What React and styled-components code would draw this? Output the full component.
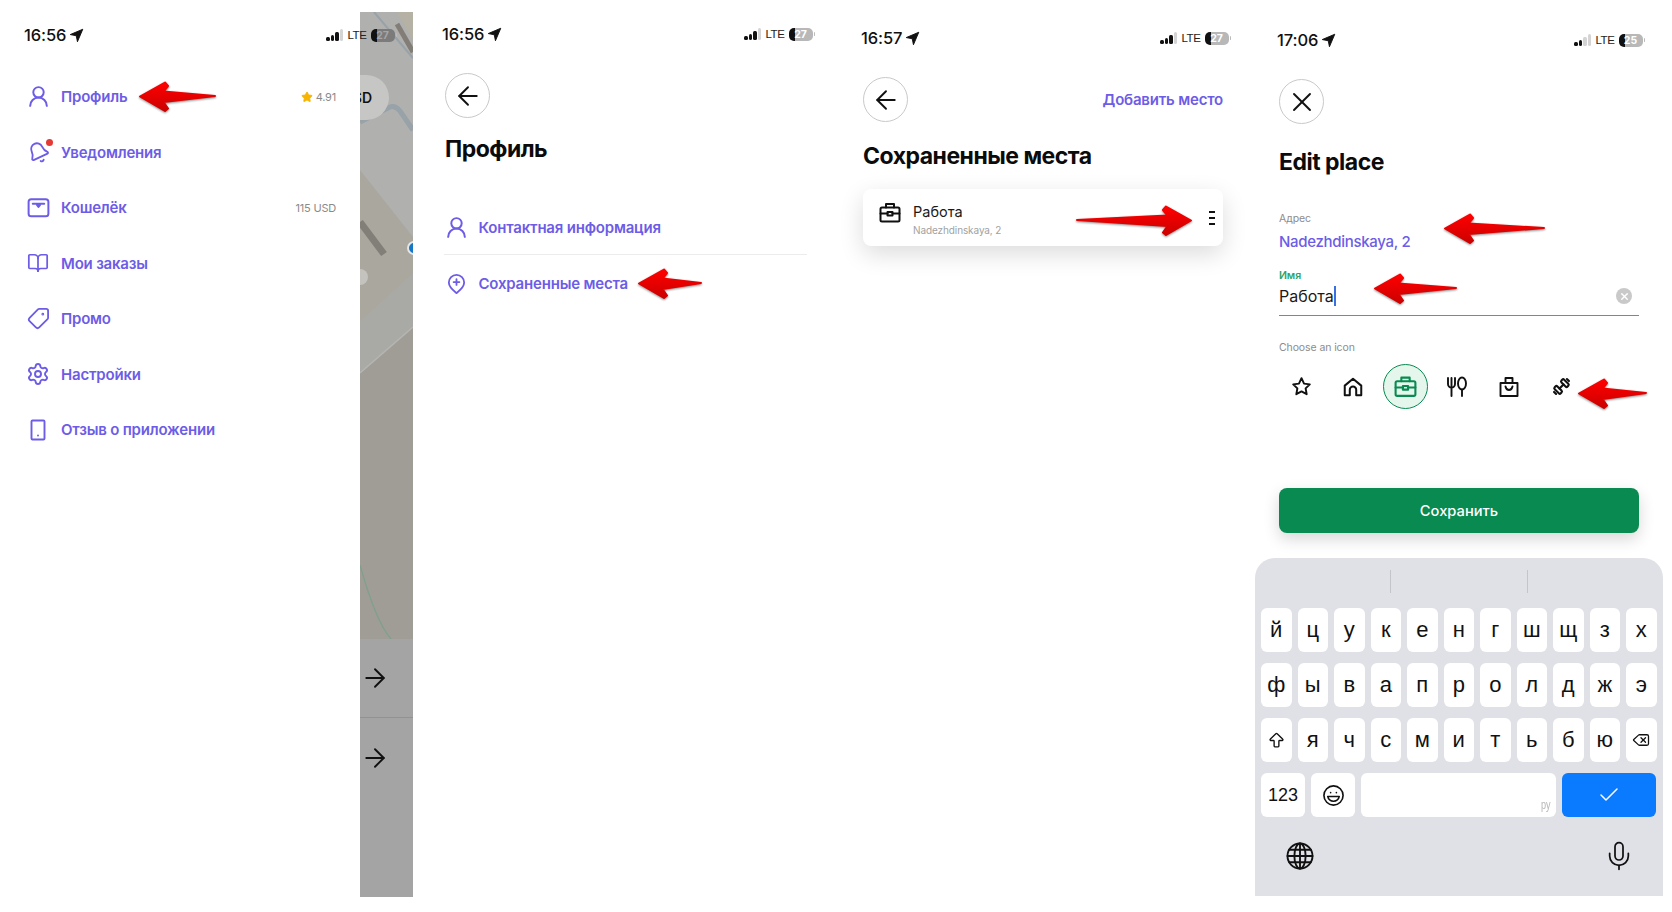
import React from 'react';
import styled, { createGlobalStyle } from 'styled-components';
import {
  ArrowLeft, ArrowRight, BookOpen, Check, Delete, Laugh, Mic, Settings, Star, Tag, UserRound, X, ArrowBigUp, Bell,
} from 'lucide-react';

const PURPLE = '#6c5ce6';
const GREEN = '#088a50';

const Global = createGlobalStyle`
  html, body { margin: 0; padding: 0; background: #fff; }
  body { font-family: Inter, "Noto Sans", sans-serif; color: #111; }
  * { box-sizing: border-box; }
`;

const Board = styled.div`
  position: relative;
  display: flex;
  width: 1672px;
  height: 912px;
  overflow: hidden;
  background: #fff;
`;

const Screen = styled.section`
  flex: none;
  width: ${p => p.$width}px;
  display: flex;
  flex-direction: ${p => (p.$row ? 'row' : 'column')};
  align-items: flex-start;
`;

const Content = styled.div`
  width: ${p => p.$width}px;
  margin-left: ${p => p.$left}px;
`;

/* status bar */
const Status = styled.div`
  position: relative;
  z-index: 2;
  flex: none;
  width: ${p => p.$width}px;
  height: 20px;
  margin: ${p => p.$top}px 0 ${p => p.$bottom ?? 29}px ${p => p.$left}px;
  display: flex;
  align-items: center;
`;
const Clock = styled.span`
  font-size: 16.5px;
  font-weight: 500;
  letter-spacing: -0.1px;
  color: #111;
  margin-right: 3px;
`;
const Spacer = styled.span`flex: 1;`;
const Bars = styled.span`
  display: flex;
  align-items: flex-end;
  gap: 1px;
  height: 12px;
  margin-right: 4px;
`;
const SignalBar = styled.i`
  display: block;
  width: 3.6px;
  border-radius: 1.5px;
  height: ${p => p.$h}px;
  background: ${p => (p.$on ? '#111' : '#d4d4d4')};
`;
const Lte = styled.span`
  font-family: "Liberation Sans", sans-serif;
  font-size: 11.5px;
  letter-spacing: -0.4px;
  color: #222;
  margin-right: 4px;
`;
const Battery = styled.span`
  display: flex;
  align-items: center;
  justify-content: center;
  width: 24px;
  height: 13px;
  border-radius: 5px;
  font-size: 10.5px;
  font-weight: 700;
  color: ${p => (p.$dim ? '#a5a5a5' : '#fff')};
  background: linear-gradient(90deg, #111 ${p => p.$level}%, ${p => (p.$dim ? '#7b7b7b' : '#b8b8b8')} ${p => p.$level}%);
`;
const Nub = styled.i`
  display: block;
  width: 1.5px;
  height: 4px;
  margin-left: 1px;
  border-radius: 1px;
  background: #bbb;
`;

function LocationArrow() {
  return (
    <svg width="15" height="15" viewBox="0 0 24 24" fill="#111" stroke="#111" strokeWidth="1.5" strokeLinejoin="round">
      <path d="M22 2 2 10.5l9.6 1.9L13.5 22z" />
    </svg>
  );
}

function StatusBar({ time, level, signal = 3, dim, ...rest }) {
  return (
    <Status {...rest}>
      <Clock>{time}</Clock>
      <LocationArrow />
      <Spacer />
      <Bars>
        {[4, 6, 9, 12].map((h, i) => <SignalBar key={h} $h={h} $on={i < signal} />)}
      </Bars>
      <Lte>LTE</Lte>
      <Battery $level={26} $dim={dim}>{level}</Battery>
      <Nub />
    </Status>
  );
}

/* drawer */
const Drawer = styled.div`
  flex: none;
  width: 360px;
  height: 100%;
`;
const Menu = styled.nav`
  margin-top: 24px;
  padding: 0 24px 0 26px;
`;
const MenuRow = styled.div`
  display: flex;
  align-items: center;
  gap: 11px;
  height: 55.5px;
`;
const IconBox = styled.span`
  position: relative;
  flex: none;
  display: flex;
  align-items: center;
  justify-content: center;
  width: 24px;
  height: 24px;
  color: ${p => p.$color || PURPLE};
  & > svg { flex: none; transform: ${p => p.$transform || 'none'}; }
`;
const RedDot = styled.i`
  position: absolute;
  top: -1px;
  right: -3px;
  width: 7px;
  height: 7px;
  border-radius: 50%;
  background: #e53935;
`;
const LinkText = styled.span`
  font-size: 15px;
  font-weight: 600;
  letter-spacing: -0.2px;
  color: ${PURPLE};
`;
const Meta = styled.span`
  margin-left: auto;
  display: flex;
  align-items: center;
  gap: 3px;
  font-size: 11px;
  letter-spacing: -0.2px;
  color: #8a8a8a;
`;

/* map */
const MapStrip = styled.div`
  flex: none;
  width: 53px;
  height: 885px;
  margin-top: 12px;
  display: flex;
  flex-direction: column;
  background: #a4a4a4;
`;
const MapCanvas = styled.div`
  position: relative;
  flex: none;
  height: 627px;
  overflow: hidden;
`;
const MapPill = styled.span`
  position: absolute;
  top: 63px;
  left: -50px;
  width: 79px;
  height: 45px;
  padding-right: 17px;
  border-radius: 0 23px 23px 0;
  display: flex;
  align-items: center;
  justify-content: flex-end;
  font-size: 14px;
  font-weight: 600;
  color: #111;
  background: #c6c6c5;
`;
const SheetRow = styled.div`
  flex: ${p => (p.$grow ? 1 : 'none')};
  height: ${p => (p.$grow ? 'auto' : '79px')};
  padding: ${p => (p.$grow ? '25px' : '24px')} 0 0 0;
  border-bottom: ${p => (p.$grow ? 'none' : '1px solid #929292')};
  color: #111;
`;

/* shared page head */
const RoundButton = styled.button`
  display: flex;
  align-items: center;
  justify-content: center;
  width: 45px;
  height: 45px;
  padding: 0;
  border: 1px solid #c9c9c9;
  border-radius: 50%;
  background: #fff;
  color: #111;
`;
const TopRow = styled.div`
  display: flex;
  align-items: center;
  justify-content: space-between;
`;
const ActionLink = styled.span`
  font-size: 15px;
  font-weight: 600;
  letter-spacing: -0.2px;
  color: ${PURPLE};
`;
const Title = styled.h1`
  margin: ${p => p.$top}px 0 0;
  font-size: 23px;
  line-height: 28px;
  font-weight: 700;
  letter-spacing: -0.5px;
  color: #0b0b0b;
`;

/* profile list */
const ProfileList = styled.div`
  margin-top: 36px;
  margin-left: -1px;
`;
const ProfileRow = styled.div`
  display: flex;
  align-items: center;
  gap: 10.5px;
  height: 56px;
  padding-top: ${p => (p.$first ? 1 : 0)}px;
  border-bottom: ${p => (p.$first ? '1px solid #ececec' : 'none')};
`;

/* saved place card */
const Card = styled.div`
  display: flex;
  align-items: center;
  height: 57px;
  margin-top: 19px;
  padding: 0 8px 0 15px;
  border-radius: 8px;
  background: #fff;
  box-shadow: 0 8px 24px rgba(0, 0, 0, 0.14);
`;
const PlaceIcon = styled.span`
  flex: none;
  display: flex;
  width: 24px;
  height: 24px;
  margin-top: -10px;
  align-items: center;
  justify-content: center;
  color: #111;
`;
const PlaceText = styled.div`
  margin: 4px 0 0 11px;
  flex: 1;
`;
const PlaceName = styled.div`
  font-size: 14.5px;
  line-height: 19px;
  color: #1a1a1a;
`;
const PlaceAddress = styled.div`
  margin-top: 2px;
  font-size: 10px;
  line-height: 14px;
  letter-spacing: -0.1px;
  color: #a2a2a2;
`;
const Dots = styled.span`
  display: flex;
  flex-direction: column;
  gap: 4px;
`;
const Dash = styled.i`
  display: block;
  width: 6px;
  height: 2px;
  background: #111;
`;

/* edit form */
const FieldLabel = styled.div`
  margin-top: ${p => p.$top}px;
  font-size: 10.5px;
  line-height: 14px;
  letter-spacing: -0.1px;
  color: ${p => p.$color || '#8c8c8c'};
  font-weight: ${p => p.$weight || 400};
`;
const AddressValue = styled.div`
  margin-top: 6px;
  font-size: 15px;
  line-height: 20px;
  letter-spacing: -0.3px;
  font-weight: 500;
  color: ${PURPLE};
`;
const InputRow = styled.div`
  display: flex;
  align-items: center;
  padding: 3px 7px 9px 0;
  border-bottom: 1.5px solid #41ab78;
`;
const InputValue = styled.span`
  font-size: 16px;
  line-height: 20px;
  color: #1a1a1a;
`;
const Caret = styled.i`
  display: inline-block;
  width: 2px;
  height: 20px;
  background: #3b6fe0;
`;
const ClearIcon = styled.span`
  margin-left: auto;
  display: flex;
  align-items: center;
  justify-content: center;
  width: 16px;
  height: 16px;
  border-radius: 50%;
  background: #c9c9c9;
  color: #fff;
`;
const IconPicker = styled.div`
  display: flex;
  margin: 9px 0 0 -4px;
`;
const PickerCell = styled.span`
  flex: none;
  width: 52px;
  height: 45px;
  display: flex;
  align-items: center;
  justify-content: center;
  color: #111;
`;
const Selected = styled.span`
  display: flex;
  align-items: center;
  justify-content: center;
  width: 45px;
  height: 45px;
  border: 1.6px solid ${GREEN};
  border-radius: 50%;
  background: #e5f7ec;
  color: ${GREEN};
`;
const SaveButton = styled.button`
  display: block;
  width: 100%;
  height: 45px;
  margin-top: 79px;
  border: 0;
  border-radius: 8px;
  background: ${GREEN};
  color: #fff;
  font-family: inherit;
  font-size: 14.7px;
  font-weight: 500;
  box-shadow: 0 6px 16px rgba(0, 0, 0, 0.16);
`;

/* keyboard */
const Keyboard = styled.div`
  width: 408px;
  height: 338px;
  margin-top: 25px;
  padding: 12px 6px 0;
  border-radius: 20px 20px 0 0;
  background: #e0e1e6;
`;
const Suggestions = styled.div`
  display: flex;
  justify-content: center;
  gap: 136px;
  height: 38px;
`;
const SuggestLine = styled.i`
  display: block;
  width: 1px;
  height: 23px;
  background: #c4c5ca;
`;
const KeyRow = styled.div`
  display: flex;
  gap: 6px;
  margin-bottom: 11px;
`;
const Key = styled.span`
  position: relative;
  flex: none;
  width: ${p => p.$w || 30.5}px;
  height: 44px;
  display: flex;
  align-items: center;
  justify-content: center;
  border-radius: 6px;
  background: ${p => p.$bg || '#fff'};
  color: ${p => p.$fg || '#111'};
  font-family: "Liberation Sans", sans-serif;
  font-size: ${p => p.$size || 22}px;
`;
const LangHint = styled.span`
  position: absolute;
  right: 3px;
  bottom: 5px;
  font-size: 13px;
  color: #b8b8b8;
  transform: scaleX(0.7);
`;
const KeyboardFoot = styled.div`
  display: flex;
  justify-content: space-between;
  align-items: center;
  padding: 12px 22px 0 24px;
  color: #111;
`;

/* annotation arrows */
const ArrowMark = styled.svg`
  position: absolute;
  z-index: 5;
  left: ${p => p.$x}px;
  top: ${p => p.$y}px;
  transform: ${p => (p.$right ? 'scaleX(-1)' : 'none')};
  filter: drop-shadow(0.5px 1.5px 1px rgba(0, 0, 0, 0.45));
  overflow: visible;
`;

function RedArrow({ x, y, w, right, id }) {
  const d = `M2 16.5 L27 2.5 L30 6 L25.5 11.5 L${w} 16 L25.5 22 L30 28.5 L27 31 Z`;
  return (
    <ArrowMark $x={x} $y={y} $right={right} width={w} height="33" viewBox={`0 0 ${w} 33`}>
      <defs>
        <linearGradient id={id} x1="0" y1="0" x2="0" y2="1">
          <stop offset="0" stopColor="#ff0000" />
          <stop offset="1" stopColor="#cc0000" />
        </linearGradient>
      </defs>
      <path d={d} fill={`url(#${id})`} stroke={`url(#${id})`} strokeWidth="2" strokeLinejoin="round" />
    </ArrowMark>
  );
}

/* icons drawn by hand */
const Stroke = ({ children, size = 24, width = 1.9 }) => (
  <svg width={size} height={size} viewBox="0 0 24 24" fill="none" stroke="currentColor" strokeWidth={width} strokeLinecap="round" strokeLinejoin="round">
    {children}
  </svg>
);
const WalletIcon = () => (
  <Stroke size={25}>
    <rect x="2.5" y="4" width="19" height="16.5" rx="2.5" />
    <path d="M6.5 8.5h11" />
    <path d="M10.5 9.5h3l-1.5 2z" fill="currentColor" />
  </Stroke>
);
const PhoneIcon = () => (
  <Stroke>
    <rect x="5.5" y="2.5" width="13" height="19" rx="1" />
    <path d="M12 17.5h.01" />
  </Stroke>
);
const PinPlusIcon = () => (
  <Stroke size={23}>
    <path d="M20 11c0 5-5.5 9-8 11-2.5-2-8-6-8-11a8 8 0 0 1 16 0z" />
    <path d="M12 7.5v6M9 10.5h6" />
  </Stroke>
);
const CaseIcon = ({ size = 25 }) => (
  <Stroke size={size} width={2}>
    <rect x="2.5" y="7" width="19" height="14" rx="1.5" />
    <path d="M8 7V3.5h8V7" />
    <path d="M2.5 13h7M14.5 13h7" />
    <rect x="9.5" y="11.5" width="5" height="3.5" />
  </Stroke>
);
const StarIcon = () => (
  <Stroke size={21} width={2.2}>
    <path d="M12 2.5l2.9 6.2 6.6.9-4.8 4.6 1.2 6.6-5.9-3.2-5.9 3.2 1.2-6.6-4.8-4.6 6.6-.9z" />
  </Stroke>
);
const HomeIcon = () => (
  <Stroke size={22} width={2.2}>
    <path d="M3 21V10.5L12 3l9 7.5V21h-5.5v-6a3.5 3.5 0 0 0-7 0v6z" />
  </Stroke>
);
const CutleryIcon = () => (
  <Stroke>
    <path d="M3 3v6a3.5 3.5 0 0 0 7 0V3M6.5 3v18" />
    <ellipse cx="17" cy="8.5" rx="4" ry="6" />
    <path d="M17 14.5V21" />
  </Stroke>
);
const BagIcon = () => (
  <Stroke>
    <path d="M3.5 8h17v13h-17z" />
    <path d="M8.5 8V3h7v5" />
    <path d="M8.5 11.5c.5 2.5 2 3.5 3.5 3.5s3-1 3.5-3.5" />
  </Stroke>
);
const DumbbellIcon = () => (
  <Stroke size={23} width={2.2}>
    <g transform="rotate(-45 12 12)">
      <path d="M9 12h6M2.5 10.5v3M21.5 10.5v3" />
      <rect x="5" y="7.5" width="4" height="9" rx="1.5" />
      <rect x="15" y="7.5" width="4" height="9" rx="1.5" />
    </g>
  </Stroke>
);
const GlobeIcon = () => (
  <Stroke size={30} width={1.5}>
    <circle cx="12" cy="12" r="10" />
    <ellipse cx="12" cy="12" rx="4.5" ry="10" />
    <path d="M12 2v20M2 12h20M3.4 7h17.2M3.4 17h17.2" />
  </Stroke>
);
const MapArt = () => (
  <svg width="53" height="627" viewBox="0 0 53 627">
    <rect width="53" height="627" fill="#b0b0ae" />
    <path d="M0 158 L53 225 V262 L0 310Z" fill="#aaa79e" />
    <path d="M0 210 L24 242" stroke="#827f78" strokeWidth="7" />
    <path d="M0 310 L53 262 V315 L0 361Z" fill="#a9a9a6" />
    <path d="M0 361 L53 315 V627 H0Z" fill="#a09d96" />
    <path d="M0 361 L53 315" stroke="#b5b5b2" strokeWidth="1.5" />
    <path d="M14 0 L53 46" stroke="#98a2a9" strokeWidth="2" />
    <path d="M37 0H53V28Z" fill="#b6b1a5" />
    <path d="M37 12 L53 40" stroke="#827e77" strokeWidth="5" />
    <path d="M0 110 L30 95 Q35 93 40 99 L53 118" fill="none" stroke="#98a2a9" strokeWidth="5" />
    <path d="M0 553 Q16 610 31 627" fill="none" stroke="#7fa08d" strokeWidth="1.3" />
    <circle cx="54" cy="236" r="6" fill="#1676c8" stroke="#e6e6e6" strokeWidth="2" />
    <path d="M0 257a8 8 0 0 1 0 16z" fill="#c5c3bd" />
  </svg>
);

const KEYS = [
  ['й', 'ц', 'у', 'к', 'е', 'н', 'г', 'ш', 'щ', 'з', 'х'],
  ['ф', 'ы', 'в', 'а', 'п', 'р', 'о', 'л', 'д', 'ж', 'э'],
];
const KEYS3 = ['я', 'ч', 'с', 'м', 'и', 'т', 'ь', 'б', 'ю'];

export default function App() {
  return (
    <Board>
      <Global />

      <Screen $width={413} $row>
        <Drawer>
          <StatusBar time="16:56" level="27" dim $width={373} $top={25} $left={24} $bottom={0} />
          <Menu>
            <MenuRow>
              <IconBox><UserRound size={25} strokeWidth={1.9} /></IconBox>
              <LinkText>Профиль</LinkText>
              <Meta><Star size={12} fill="#f7b500" stroke="#f7b500" />4.91</Meta>
            </MenuRow>
            <MenuRow>
              <IconBox $transform="rotate(-25deg)"><Bell size={23} strokeWidth={1.9} /><RedDot /></IconBox>
              <LinkText>Уведомления</LinkText>
            </MenuRow>
            <MenuRow>
              <IconBox><WalletIcon /></IconBox>
              <LinkText>Кошелёк</LinkText>
              <Meta>115 USD</Meta>
            </MenuRow>
            <MenuRow>
              <IconBox><BookOpen size={22} strokeWidth={1.9} /></IconBox>
              <LinkText>Мои заказы</LinkText>
            </MenuRow>
            <MenuRow>
              <IconBox $transform="scaleX(-1)"><Tag size={23} strokeWidth={1.9} /></IconBox>
              <LinkText>Промо</LinkText>
            </MenuRow>
            <MenuRow>
              <IconBox><Settings size={24} strokeWidth={1.9} /></IconBox>
              <LinkText>Настройки</LinkText>
            </MenuRow>
            <MenuRow>
              <IconBox><PhoneIcon /></IconBox>
              <LinkText>Отзыв о приложении</LinkText>
            </MenuRow>
          </Menu>
        </Drawer>
        <MapStrip>
          <MapCanvas>
            <MapArt />
            <MapPill>USD</MapPill>
          </MapCanvas>
          <SheetRow><ArrowRight size={30} strokeWidth={1.5} /></SheetRow>
          <SheetRow $grow><ArrowRight size={30} strokeWidth={1.5} /></SheetRow>
        </MapStrip>
      </Screen>

      <Screen $width={422}>
        <StatusBar time="16:56" level="27" $width={373} $top={24} $left={29} />
        <Content $left={32} $width={362}>
          <RoundButton><ArrowLeft size={30} strokeWidth={1.5} /></RoundButton>
          <Title $top={17}>Профиль</Title>
          <ProfileList>
            <ProfileRow $first>
              <IconBox><UserRound size={25} strokeWidth={1.9} /></IconBox>
              <LinkText>Контактная информация</LinkText>
            </ProfileRow>
            <ProfileRow>
              <IconBox><PinPlusIcon /></IconBox>
              <LinkText>Сохраненные места</LinkText>
            </ProfileRow>
          </ProfileList>
        </Content>
      </Screen>

      <Screen $width={420}>
        <StatusBar time="16:57" level="27" $width={370} $top={28} $left={26} />
        <Content $left={28} $width={360}>
          <TopRow>
            <RoundButton><ArrowLeft size={30} strokeWidth={1.5} /></RoundButton>
            <ActionLink>Добавить место</ActionLink>
          </TopRow>
          <Title $top={20}>Сохраненные места</Title>
          <Card>
            <PlaceIcon><CaseIcon /></PlaceIcon>
            <PlaceText>
              <PlaceName>Работа</PlaceName>
              <PlaceAddress>Nadezhdinskaya, 2</PlaceAddress>
            </PlaceText>
            <Dots><Dash /><Dash /><Dash /></Dots>
          </Card>
        </Content>
      </Screen>

      <Screen $width={417}>
        <StatusBar time="17:06" level="25" signal={2} $width={368} $top={30} $left={22} />
        <Content $left={24} $width={360}>
          <RoundButton><X size={32} strokeWidth={1.4} /></RoundButton>
          <Title $top={24}>Edit place</Title>
          <FieldLabel $top={36}>Адрес</FieldLabel>
          <AddressValue>Nadezhdinskaya, 2</AddressValue>
          <FieldLabel $top={17} $color="#2ba36a" $weight={600}>Имя</FieldLabel>
          <InputRow>
            <InputValue>Работа</InputValue>
            <Caret />
            <ClearIcon><X size={11} strokeWidth={3} /></ClearIcon>
          </InputRow>
          <FieldLabel $top={25}>Choose an icon</FieldLabel>
          <IconPicker>
            <PickerCell><StarIcon /></PickerCell>
            <PickerCell><HomeIcon /></PickerCell>
            <PickerCell><Selected><CaseIcon /></Selected></PickerCell>
            <PickerCell><CutleryIcon /></PickerCell>
            <PickerCell><BagIcon /></PickerCell>
            <PickerCell><DumbbellIcon /></PickerCell>
          </IconPicker>
          <SaveButton>Сохранить</SaveButton>
        </Content>
        <Keyboard>
          <Suggestions><SuggestLine /><SuggestLine /></Suggestions>
          {KEYS.map(row => (
            <KeyRow key={row[0]}>{row.map(k => <Key key={k}>{k}</Key>)}</KeyRow>
          ))}
          <KeyRow>
            <Key><ArrowBigUp size={19} strokeWidth={1.7} /></Key>
            {KEYS3.map(k => <Key key={k}>{k}</Key>)}
            <Key><Delete size={18} strokeWidth={1.7} /></Key>
          </KeyRow>
          <KeyRow>
            <Key $w={44} $size={18}>123</Key>
            <Key $w={44}><Laugh size={23} strokeWidth={1.7} /></Key>
            <Key $w={194.5}><LangHint>ру</LangHint></Key>
            <Key $w={94} $bg="#0a7aff" $fg="#fff"><Check size={24} strokeWidth={1.5} /></Key>
          </KeyRow>
          <KeyboardFoot>
            <GlobeIcon />
            <Mic size={32} strokeWidth={1.3} />
          </KeyboardFoot>
        </Keyboard>
      </Screen>

      <RedArrow id="a1" x={138} y={80} w={77} />
      <RedArrow id="a2" x={637} y={267} w={64} />
      <RedArrow id="a3" x={1077} y={204} w={116} right />
      <RedArrow id="a4" x={1443} y={212} w={101} />
      <RedArrow id="a5" x={1373} y={272} w={83} />
      <RedArrow id="a6" x={1577} y={377} w={69} />
    </Board>
  );
}
